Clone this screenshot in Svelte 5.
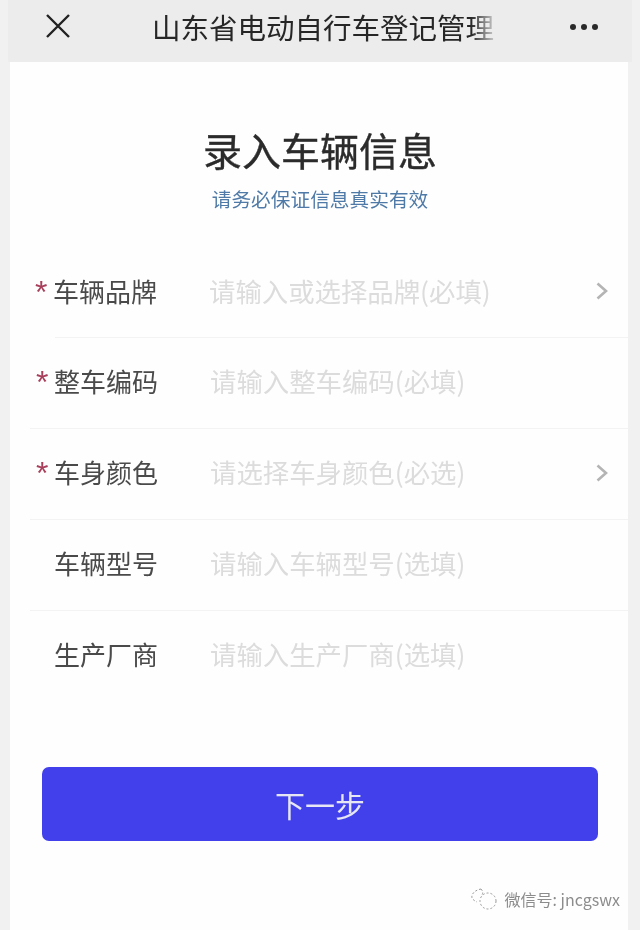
<script>
  const fields = [
    { label: '车辆品牌', hint: '请输入或选择品牌(必填)', required: true, arrow: true, inset: true },
    { label: '整车编码', hint: '请输入整车编码(必填)', required: true },
    { label: '车身颜色', hint: '请选择车身颜色(必选)', required: true, arrow: true },
    { label: '车辆型号', hint: '请输入车辆型号(选填)' },
    { label: '生产厂商', hint: '请输入生产厂商(选填)', last: true }
  ];
</script>

<div class="page">
  <header class="topbar">
    <svg class="close" width="26" height="26" viewBox="0 0 26 26">
      <path d="M2 2 L24 24 M24 2 L2 24" stroke="#222" stroke-width="2.4" fill="none" />
    </svg>
    <div class="bar-title">山东省电动自行车登记管理</div>
    <div class="dots"><i></i><i></i><i></i></div>
  </header>

  <main class="card">
    <h1>录入车辆信息</h1>
    <p class="sub">请务必保证信息真实有效</p>

    <div class="form">
      {#each fields as f}
        <div class={"row" + (f.inset ? " inset" : "") + (f.last ? " last" : "")}>
          <span class="star">{f.required ? '*' : ''}</span>
          <span class="label">{f.label}</span>
          <span class="hint">{f.hint}</span>
          {#if f.arrow}
            <svg class="arrow" width="14" height="20" viewBox="0 0 14 20">
              <path d="M2.5 2.5 L11 10 L2.5 17.5" stroke="#b4b4b4" stroke-width="2.6" fill="none" />
            </svg>
          {/if}
        </div>
      {/each}
    </div>

    <button class="next">下一步</button>

    <div class="mark">
      <svg width="30" height="26" viewBox="0 0 30 26">
        <g fill="none" stroke="#9a9a9a" stroke-width="1" stroke-dasharray="2 2">
          <path d="M11 3 C5 4 1 8 2 12 C3 14 5 15 7 16" />
          <path d="M11 3 C13 5 13 7 12 9" />
          <circle cx="18" cy="15" r="8" />
        </g>
      </svg>
      <span>微信号: jncgswx</span>
    </div>
  </main>
</div>

<style>
  :global(body) {
    margin: 0;
    background: #f1f1f1;
  }

  .page {
    width: 640px;
    height: 930px;
    overflow: hidden;
    display: flex;
    flex-direction: column;
    font-family: "Noto Sans CJK SC", "Liberation Sans", sans-serif;
    filter: blur(0.45px);
  }

  .topbar {
    height: 62px;
    flex: none;
    background: #ececec;
    margin: 0 8px;
    display: flex;
    align-items: center;
    padding: 0 34px 10px 37px;
    box-sizing: border-box;
  }

  .close {
    flex: none;
  }

  .bar-title {
    margin-left: 81px;
    width: 343px;
    font-size: 28.5px;
    white-space: nowrap;
    color: #262626;
    -webkit-mask-image: linear-gradient(to right, #000 93%, rgba(0, 0, 0, 0.15) 100%);
    mask-image: linear-gradient(to right, #000 93%, rgba(0, 0, 0, 0.15) 100%);
  }

  .dots {
    margin-left: auto;
    display: flex;
    gap: 5px;
    margin-top: 2px;
  }

  .dots i {
    width: 6px;
    height: 6px;
    border-radius: 50%;
    background: #2a2a2a;
  }

  .card {
    position: relative;
    flex: 1;
    margin: 0 12px 0 10px;
    background: #fefefe;
    display: flex;
    flex-direction: column;
    align-items: center;
    padding-top: 60px;
  }

  h1 {
    margin: 0;
    font-size: 39px;
    line-height: 54px;
    font-weight: 400;
    color: #2b2b2b;
    -webkit-text-stroke: 0.4px #2b2b2b;
    margin-left: 2px;
  }

  .sub {
    margin: 9px 0 0 2px;
    font-size: 19.7px;
    line-height: 28px;
    color: #4f7aa8;
  }

  .form {
    align-self: stretch;
    margin-top: 34px;
  }

  .row {
    position: relative;
    height: 91px;
    display: flex;
    align-items: center;
    box-sizing: border-box;
    border-bottom: 1px solid #f3f3f3;
    margin-left: 20px;
    padding-left: 5px;
    padding-bottom: 5px;
  }

  .row.inset {
    margin-left: 45px;
    padding-bottom: 3px;
  }

  .row.inset .star {
    margin-left: -25px;
  }

  .row.last {
    border-bottom: none;
    padding-bottom: 7px;
  }

  .star {
    width: 18px;
    margin-left: 1px;
    flex: none;
    font-size: 32px;
    line-height: 22px;
    height: 20px;
    color: #a8405c;
    font-family: "Liberation Sans", sans-serif;
  }

  .label {
    width: 156px;
    flex: none;
    font-size: 26px;
    color: #4a4a4a;
  }

  .hint {
    font-size: 26.4px;
    color: #dcdcdc;
    white-space: nowrap;
  }

  .arrow {
    position: absolute;
    right: 13px;
    top: 34px;
    margin-right: 6px;
  }

  .next {
    margin-top: 65px;
    width: 556px;
    height: 74px;
    margin-left: 2px;
    flex: none;
    border: none;
    border-radius: 7px;
    background: #4140ea;
    color: #e6e6f5;
    font-family: inherit;
    font-size: 30px;
    padding: 0;
  }

  .mark {
    position: absolute;
    right: 8px;
    top: 824px;
    display: flex;
    align-items: center;
    gap: 5px;
    font-size: 16px;
    color: #8c8c8c;
  }
</style>
